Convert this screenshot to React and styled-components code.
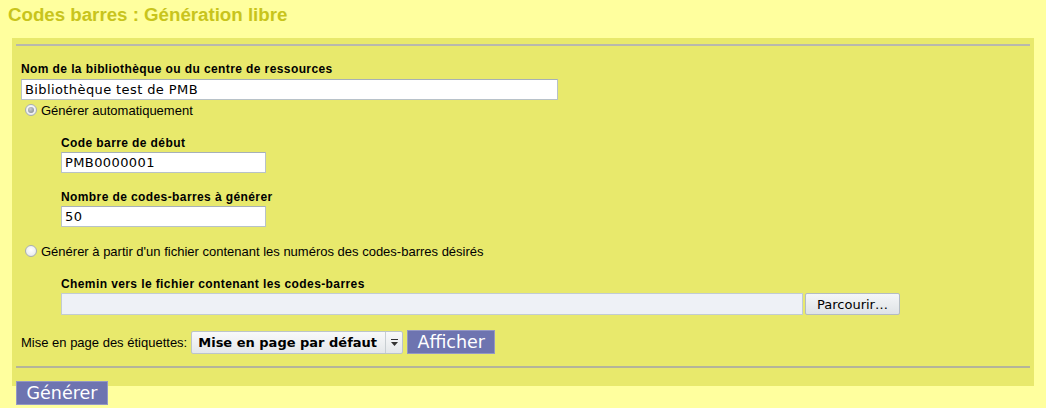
import React, { useState } from 'react'
import styled, { createGlobalStyle } from 'styled-components'

const GlobalStyle = createGlobalStyle`
  body {
    margin: 0;
    background-color: #ffff9e;
    font-family: 'Liberation Sans', Arial, sans-serif;
    color: #000;
  }
`

const App = () => {
  const [mode, setMode] = useState('auto')
  const [form, setForm] = useState({
    library: 'Bibliothèque test de PMB',
    start: 'PMB0000001',
    count: '50',
  })

  const handleChange = (e) => {
    setForm({ ...form, [e.target.name]: e.target.value })
  }

  return (
    <Page>
      <GlobalStyle />
      <Title>Codes barres : Génération libre</Title>
      <Panel>
        <Rule />
        <Label $top={16} $bottom={3}>
          Nom de la bibliothèque ou du centre de ressources
        </Label>
        <TextInput
          name='library'
          $width={537}
          value={form.library}
          onChange={handleChange}
        />
        <RadioRow $top={3}>
          <Radio
            type='radio'
            name='mode'
            checked={mode === 'auto'}
            onChange={() => setMode('auto')}
          />
          Générer automatiquement
        </RadioRow>
        <Indent>
          <Label $top={19}>Code barre de début</Label>
          <TextInput
            name='start'
            $width={205}
            value={form.start}
            onChange={handleChange}
          />
          <Label $top={17}>Nombre de codes-barres à générer</Label>
          <TextInput
            name='count'
            $width={205}
            value={form.count}
            onChange={handleChange}
          />
        </Indent>
        <RadioRow $top={17}>
          <Radio
            type='radio'
            name='mode'
            checked={mode === 'file'}
            onChange={() => setMode('file')}
          />
          Générer à partir d'un fichier contenant les numéros des codes-barres désirés
        </RadioRow>
        <Indent>
          <Label $top={19}>Chemin vers le fichier contenant les codes-barres</Label>
          <FileRow>
            <FilePath />
            <BrowseButton type='button'>Parcourir…</BrowseButton>
          </FileRow>
        </Indent>
        <LayoutRow>
          <span>Mise en page des étiquettes:</span>
          <SelectBox>
            <span>Mise en page par défaut</span>
            <Arrow>
              <svg width='9' height='9' viewBox='0 0 9 9'>
                <rect x='1' y='1' width='7' height='1' fill='#333' />
                <path d='M1 4 L8 4 L4.5 8 Z' fill='#333' />
              </svg>
            </Arrow>
          </SelectBox>
          <BlueButton type='button' $width={88}>Afficher</BlueButton>
        </LayoutRow>
        <Rule $bottom />
      </Panel>
      <SubmitWrap>
        <BlueButton type='button' $width={92}>Générer</BlueButton>
      </SubmitWrap>
    </Page>
  )
}

export default App

const Page = styled.div`
  width: 1046px;
  height: 408px;
  overflow: hidden;
`

const Title = styled.h1`
  margin: 0;
  padding: 4px 0 0 8px;
  height: 38px;
  box-sizing: border-box;
  font-size: 18.7px;
  font-weight: bold;
  color: #c8c41c;
`

const Panel = styled.div`
  margin-left: 12px;
  width: 1022px;
  height: 348px;
  box-sizing: border-box;
  background-color: #e8e96c;
  padding: 6px 4px 0 4px;
  display: flex;
  flex-direction: column;
  align-items: flex-start;
`

const Rule = styled.div`
  align-self: stretch;
  height: 2px;
  background-color: ${(p) => (p.$bottom ? '#b4b49a' : '#b8b8ac')};
  margin-top: ${(p) => (p.$bottom ? '12px' : '0')};
`

const Label = styled.label`
  display: block;
  margin: ${(p) => p.$top}px 0 ${(p) => p.$bottom ?? 2}px 5px;
  font-size: 12px;
  line-height: 14px;
  font-weight: bold;
  letter-spacing: 0.4px;
`

const TextInput = styled.input`
  display: block;
  margin-left: 5px;
  width: ${(p) => p.$width}px;
  height: 21px;
  box-sizing: border-box;
  border: 1px solid #b8c2c8;
  border-top-color: #a6b0b8;
  background: #fff;
  padding: 0 3px;
  font-family: 'DejaVu Sans', sans-serif;
  font-size: 13px;
  letter-spacing: 0.4px;
  color: #000;
  outline: none;
`

const RadioRow = styled.label`
  display: flex;
  align-items: center;
  gap: 4px;
  margin: ${(p) => p.$top}px 0 0 9px;
  height: 14px;
  font-size: 13px;
`

const Radio = styled.input`
  appearance: none;
  margin: 0;
  width: 12px;
  height: 12px;
  border-radius: 50%;
  border: 1px solid #a8aeb4;
  background: radial-gradient(circle at 50% 40%, #ffffff 0%, #eef0f2 60%, #d6dade 100%);
  box-sizing: border-box;
  display: grid;
  place-items: center;
  &:checked::after {
    content: '';
    width: 6px;
    height: 6px;
    border-radius: 50%;
    background: radial-gradient(circle at 40% 35%, #c8ccd0, #7c8288);
  }
`

const Indent = styled.div`
  padding-left: 40px;
  display: flex;
  flex-direction: column;
  align-items: flex-start;
`

const FileRow = styled.div`
  display: flex;
  align-items: center;
  gap: 2px;
  margin-left: 5px;
`

const FilePath = styled.div`
  width: 742px;
  height: 22px;
  box-sizing: border-box;
  border: 1px solid #c2ccd2;
  background-color: #eef1f6;
`

const BrowseButton = styled.button`
  width: 95px;
  height: 22px;
  box-sizing: border-box;
  border: 1px solid #b4bcc2;
  border-radius: 2px;
  background: linear-gradient(#f4f6f8, #dfe3e6);
  font-family: 'DejaVu Sans', sans-serif;
  font-size: 13px;
  color: #000;
  padding: 0;
`

const LayoutRow = styled.div`
  display: flex;
  align-items: center;
  margin: 15px 0 0 5px;
  font-size: 13px;
  height: 24px;
  & > span {
    margin-right: 4px;
  }
`

const SelectBox = styled.div`
  display: flex;
  align-items: center;
  justify-content: space-between;
  width: 212px;
  height: 23px;
  box-sizing: border-box;
  border: 1px solid #bcc4ca;
  border-radius: 2px;
  background: linear-gradient(#f8f9fa, #e4e7ea);
  padding-left: 6px;
  margin-right: 4px;
  font-family: 'DejaVu Sans', sans-serif;
  font-size: 13px;
  font-weight: bold;
  white-space: nowrap;
`

const Arrow = styled.div`
  width: 16px;
  height: 100%;
  border-left: 1px solid #c8ced2;
  display: grid;
  place-items: center;
`

const BlueButton = styled.button`
  width: ${(p) => p.$width}px;
  height: 24px;
  box-sizing: border-box;
  border: 1px solid #9498c4;
  background-color: #6e74b0;
  color: #fff;
  font-family: 'DejaVu Sans', sans-serif;
  font-size: 17.5px;
  padding: 0;
  line-height: 22px;
`

const SubmitWrap = styled.div`
  margin: -5px 0 0 16px;
`
